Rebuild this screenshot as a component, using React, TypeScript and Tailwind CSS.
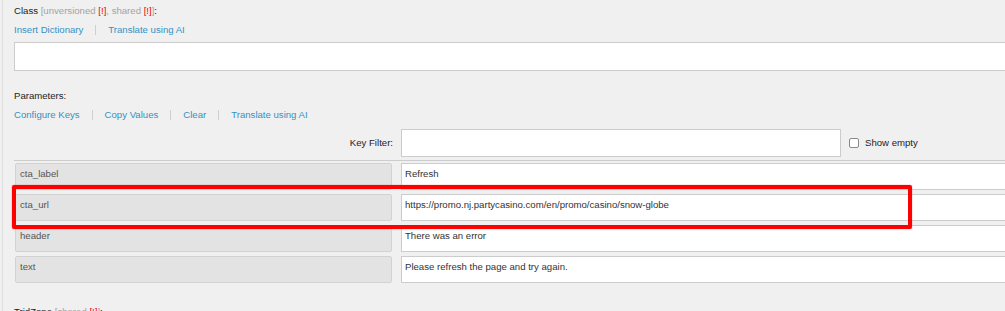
import { memo } from "react";

function Links({ items }: { items: string[] }) {
  return (
    <div className="flex items-center h-[12px] leading-[12px]">
      {items.map((label, i) => (
        <span key={label} className="flex items-center">
          {i > 0 && <span className="mx-[12px] h-[10px] w-px bg-[#cfcfcf]" />}
          <span className="text-[#3591c5] cursor-pointer whitespace-nowrap">{label}</span>
        </span>
      ))}
    </div>
  );
}

function FieldLabel({ name, tags }: { name: string; tags: string[] }) {
  return (
    <div className="h-[12px] leading-[12px] whitespace-nowrap text-[#1c1c1c]">
      {name}{" "}
      <span className="text-[#a3a3a3]">
        [
        {tags.map((t, i) => (
          <span key={t}>
            {i > 0 && ", "}
            {t} <span className="text-[#ff0000]">[!]</span>
          </span>
        ))}
        ]
      </span>
      :
    </div>
  );
}

const params = [
  { key: "cta_label", value: "Refresh" },
  { key: "cta_url", value: "https://promo.nj.partycasino.com/en/promo/casino/snow-globe" },
  { key: "header", value: "There was an error" },
  { key: "text", value: "Please refresh the page and try again." },
];

function App() {
  return (
    <div className="relative w-[1005px] h-[311px] overflow-hidden bg-[#f0f0f0] font-['Liberation_Sans',Arial,sans-serif] text-[9.6px]">
      <div className="ml-[2px] w-[1200px] h-full border-l border-[#dedede] pl-[11px] pt-[5px]">
        <FieldLabel name="Class" tags={["unversioned", "shared"]} />
        <div className="mt-[7px]">
          <Links items={["Insert Dictionary", "Translate using AI"]} />
        </div>
        <div className="mt-[6px] h-[29px] w-[1100px] bg-white border border-[#cccccc]" />

        <div className="mt-[19px] h-[12px] leading-[12px] text-[#1c1c1c]">Parameters:</div>
        <div className="mt-[7px]">
          <Links items={["Configure Keys", "Copy Values", "Clear", "Translate using AI"]} />
        </div>

        <div className="mt-[8px] flex items-center h-[28px]">
          <div className="w-[379px] text-right text-[#1c1c1c]">Key Filter:</div>
          <div className="ml-[8px] w-[440px] h-[28px] bg-white border border-[#cccccc]" />
          <div className="ml-[8px] w-[10px] h-[10px] rounded-[2px] border border-[#8a8a8a] bg-white" />
          <div className="ml-[6px] text-[#1c1c1c]">Show empty</div>
        </div>

        <div className="mt-[3px] border-t border-[#cccccc] pt-[2px] flex flex-col gap-[4px]">
          {params.map((p) => (
            <div key={p.key} className="flex h-[27px] gap-[9px] ml-[1px]">
              <div className="w-[377px] bg-[#e3e3e3] border border-[#d2d2d2] rounded-[2px] pl-[4px] pt-[4px] leading-[12px] text-[#555555]">
                {p.key}
              </div>
              <div className="w-[700px] bg-white border border-[#cccccc] pl-[3px] pt-[4px] leading-[12px] text-[#333333] whitespace-nowrap">
                {p.value}
              </div>
            </div>
          ))}
        </div>

        <div className="mt-[23px]">
          <FieldLabel name="TridZone" tags={["shared"]} />
        </div>
      </div>

      {/* highlight annotation */}
      <div className="absolute left-[12px] top-[185px] w-[900px] h-[44px] border-[4px] border-[#ff0000] rounded-[2px] shadow-[0_0_1px_#ff0000]" />
    </div>
  );
}

export default memo(App);
